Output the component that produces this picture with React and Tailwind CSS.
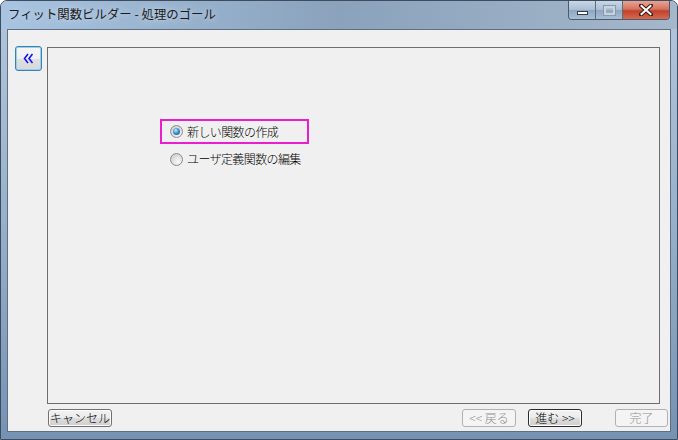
import React from "react";

const FONT = { fontFamily: '"Noto Sans CJK JP", "Noto Sans", sans-serif' };

const Button = ({ children, disabled, primary, className = "" }) => (
  <div
    className={`h-[18px] flex items-center justify-center rounded-[3px] border text-[12px] font-light leading-none ${
      disabled
        ? "border-[#adb2b5] bg-[#f4f4f4] text-[#8d8d8d]"
        : primary
        ? "border-[#2c2c2c] text-black shadow-[inset_0_0_0_1px_#fcfcfc] bg-[linear-gradient(to_bottom,#f2f2f2_0%,#ebebeb_50%,#dddddd_51%,#cfcfcf_100%)]"
        : "border-[#707070] text-black shadow-[inset_0_0_0_1px_#fcfcfc] bg-[linear-gradient(to_bottom,#f2f2f2_0%,#ebebeb_50%,#dddddd_51%,#cfcfcf_100%)]"
    } ${className}`}
  >
    {children}
  </div>
);

const Radio = ({ checked }) => (
  <div className="w-[13px] h-[13px] rounded-full border border-[#8c8c8c] flex items-center justify-center bg-[radial-gradient(circle_at_65%_70%,#f8f8f8_0%,#e2e2e2_45%,#c4c4c4_100%)]">
    {checked && (
      <div className="w-[7px] h-[7px] rounded-full bg-[radial-gradient(circle_at_40%_35%,#c6ecfb_0%,#3e94d0_45%,#10426f_100%)]" />
    )}
  </div>
);

export default function App() {
  return (
    <div
      className="w-[678px] h-[440px] flex flex-col rounded-t-[7px] border border-[#3d4c5f] bg-linear-to-b from-[#b3c7dc] via-[#98b0ca] to-[#7692b3] overflow-hidden"
      style={FONT}
    >
      {/* title bar */}
      <div className="h-[28px] shrink-0 flex items-start justify-between bg-linear-to-r from-[#a8c4e1] via-[#8aa2bc] to-[#a5b7ca]">
        <span className="ml-[7px] mt-[4px] text-[12.4px] text-[#1b1b1b] [text-shadow:0_0_6px_#dbe7f3]">
          フィット関数ビルダー - 処理のゴール
        </span>
        <div className="mr-[7px] flex h-[19px] rounded-b-[4px] border border-t-0 border-[#4b5a6c] overflow-hidden">
          <div className="w-[27px] flex items-center justify-center border-r border-[#5d6d80] bg-[linear-gradient(to_bottom,#c9d7e6_0%,#a9bdd3_50%,#8ea6c0_51%,#a9bfd6_100%)]">
            <div className="mt-[5px] w-[11px] h-[4px] bg-white border border-[#333c48]" />
          </div>
          <div className="w-[27px] flex items-center justify-center border-r border-[#5d6d80] bg-[linear-gradient(to_bottom,#c9d7e6_0%,#a9bdd3_50%,#8ea6c0_51%,#a9bfd6_100%)]">
            <div className="w-[11px] h-[9px] border-2 border-[#c8d3df] shadow-[0_0_0_1px_#8a9aad]" />
          </div>
          <div className="w-[46px] flex items-center justify-center bg-[linear-gradient(to_bottom,#e7a496_0%,#d7735f_45%,#c2412a_55%,#d66a52_100%)]">
            <svg width="14" height="12" viewBox="0 0 14 12">
              <path d="M2 1.5 L12 10.5 M12 1.5 L2 10.5" stroke="#3a1a14" strokeWidth="4" strokeLinecap="square" />
              <path d="M2.5 2 L11.5 10 M11.5 2 L2.5 10" stroke="#ffffff" strokeWidth="2" strokeLinecap="square" />
            </svg>
          </div>
        </div>
      </div>

      {/* client area */}
      <div className="flex-1 mx-[6px] mb-[7px] border border-[#5f6f82] bg-[#f0f0f0] flex flex-col">
        <div className="flex items-start">
          <div className="ml-[7px] mt-[16px] w-[27px] h-[25px] rounded-[3px] border border-[#3c7fb1] shadow-[inset_0_0_0_1px_#94d0f0] flex items-center justify-center bg-[linear-gradient(to_bottom,#f6f6f6_0%,#efefef_50%,#e0e0e0_51%,#d8d8d8_100%)]">
            <svg width="11" height="11" viewBox="0 0 11 11">
              <path d="M5 1 L1.5 5.5 L5 10 M9.5 1 L6 5.5 L9.5 10" stroke="#1414ee" strokeWidth="1.6" fill="none" />
            </svg>
          </div>
          <div className="ml-[5px] mt-[17px] w-[613px] h-[357px] border border-[#6d6d6d] text-[12px] font-light text-black">
            <div className="ml-[112px] mt-[71px] flex flex-col">
              <div className="w-[149px] h-[25px] border-2 border-[#ea1ecf] flex items-center pl-[8px]">
                <Radio checked />
                <span className="ml-[4px] tracking-[-0.6px]">新しい関数の作成</span>
              </div>
              <div className="mt-[6px] flex items-center pl-[10px]">
                <Radio />
                <span className="ml-[4px] tracking-[-0.6px]">ユーザ定義関数の編集</span>
              </div>
            </div>
          </div>
        </div>

        <div className="mt-[5px] flex items-center">
          <Button className="ml-[40px] w-[64px]">キャンセル</Button>
          <div className="flex-1" />
          <Button disabled className="w-[54px]">
            &lt;&lt; 戻る
          </Button>
          <Button primary className="ml-[12px] w-[54px]">
            進む &gt;&gt;
          </Button>
          <Button disabled className="ml-[33px] mr-[2px] w-[53px]">
            完了
          </Button>
        </div>
      </div>
    </div>
  );
}
